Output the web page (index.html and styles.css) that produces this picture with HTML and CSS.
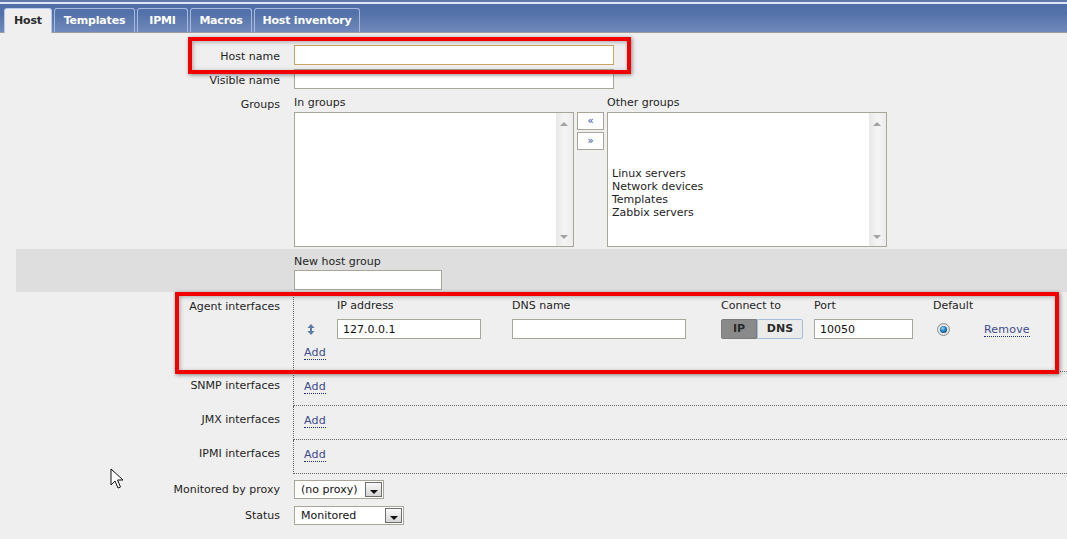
FILE: index.html
```html
<!DOCTYPE html>
<html lang="en">
<head>
    <meta charset="UTF-8">
    <title>Host configuration</title>
    <link rel="stylesheet" href="styles.css">
</head>
<body>
    <div class="tabbar">
        <ul class="tabs">
            <li class="tab active tab-host">Host</li>
            <li class="tab tab-templates">Templates</li>
            <li class="tab tab-ipmi">IPMI</li>
            <li class="tab tab-macros">Macros</li>
            <li class="tab tab-inventory">Host inventory</li>
        </ul>
    </div>

    <div class="form">
        <div class="row row-host">
            <div class="label">Host name</div>
            <div class="field"><input class="text wide focused" type="text"></div>
        </div>
        <div class="row row-visible">
            <div class="label">Visible name</div>
            <div class="field"><input class="text wide" type="text"></div>
        </div>
        <div class="row row-groups">
            <div class="label label-groups">Groups</div>
            <div class="field groups">
                <div class="group-head">In groups</div>
                <div class="group-head"></div>
                <div class="group-head">Other groups</div>
                <div class="listbox">
                    <div class="list-items"></div>
                    <div class="scrollbar"><span class="arrow up"></span><span class="arrow down"></span></div>
                </div>
                <div class="move-buttons">
                    <div class="move-btn">&laquo;</div>
                    <div class="move-btn">&raquo;</div>
                </div>
                <div class="listbox">
                    <div class="list-items other">
                        <div>Linux servers</div>
                        <div>Network devices</div>
                        <div>Templates</div>
                        <div>Zabbix servers</div>
                    </div>
                    <div class="scrollbar"><span class="arrow up"></span><span class="arrow down"></span></div>
                </div>
            </div>
        </div>
        <div class="row row-newgroup">
            <div class="label"></div>
            <div class="field">
                <div class="caption">New host group</div>
                <input class="text short" type="text">
            </div>
        </div>

        <div class="row row-agent">
            <div class="label">Agent interfaces</div>
            <div class="iface">
                <div class="iface-grid">
                    <div></div>
                    <div class="col-head">IP address</div>
                    <div class="col-head">DNS name</div>
                    <div class="col-head">Connect to</div>
                    <div class="col-head">Port</div>
                    <div class="col-head">Default</div>
                    <div></div>

                    <div class="drag">
                        <svg width="8" height="11" viewBox="0 0 8 11"><path d="M4 0 L7.5 4 L5 4 L5 7 L7.5 7 L4 11 L0.5 7 L3 7 L3 4 L0.5 4 Z" fill="#5b7ba5"/></svg>
                    </div>
                    <div><input class="text ip" type="text" value="127.0.0.1"></div>
                    <div><input class="text dns" type="text"></div>
                    <div class="toggle"><span class="opt on">IP</span><span class="opt">DNS</span></div>
                    <div><input class="text port" type="text" value="10050"></div>
                    <div class="radio-cell">
                        <svg width="13" height="13" viewBox="0 0 13 13">
                            <defs>
                                <radialGradient id="dot" cx="0.4" cy="0.35" r="0.7">
                                    <stop offset="0" stop-color="#9fd3f5"/>
                                    <stop offset="0.5" stop-color="#2a86c4"/>
                                    <stop offset="1" stop-color="#0d4f80"/>
                                </radialGradient>
                            </defs>
                            <circle cx="6.5" cy="6.5" r="6" fill="#e4e4e4" stroke="#8d8d8d"/>
                            <circle cx="6.5" cy="6.5" r="3.6" fill="url(#dot)"/>
                        </svg>
                    </div>
                    <div><span class="link">Remove</span></div>
                </div>
                <div class="add-line"><span class="link">Add</span></div>
            </div>
        </div>
        <div class="row row-iface">
            <div class="label">SNMP interfaces</div>
            <div class="iface small"><span class="link">Add</span></div>
        </div>
        <div class="row row-iface">
            <div class="label">JMX interfaces</div>
            <div class="iface small"><span class="link">Add</span></div>
        </div>
        <div class="row row-iface">
            <div class="label">IPMI interfaces</div>
            <div class="iface small"><span class="link">Add</span></div>
        </div>

        <div class="row row-proxy">
            <div class="label">Monitored by proxy</div>
            <div class="field">
                <div class="select proxy"><span>(no proxy)</span><span class="drop"></span></div>
            </div>
        </div>
        <div class="row row-status">
            <div class="label">Status</div>
            <div class="field">
                <div class="select status"><span>Monitored</span><span class="drop"></span></div>
            </div>
        </div>
    </div>

    <!-- annotation boxes drawn over the screenshot -->
    <div class="mark mark-host"></div>
    <div class="mark mark-agent"></div>

    <svg class="cursor" width="14" height="22" viewBox="0 0 14 22">
        <path d="M1 1 L1 17 L5 13 L8 20 L10.5 19 L7.5 12 L13 12 Z" fill="#fff" stroke="#111" stroke-width="1" stroke-linejoin="round"/>
    </svg>
</body>
</html>
```

FILE: styles.css
```css
/* Base */
body {
    margin: 0;
    background-color: #efefef;
    font-family: 'DejaVu Sans', Verdana, sans-serif;
    font-size: 11px;
    color: #1e1e1e;
}

/* Tab bar */
.tabbar {
    height: 32px;
    background: linear-gradient(to bottom, #5f78a9 0, #5f78a9 2px, #dfe7f3 2px, #dfe7f3 4px, #4f6ea7 4px, #5472aa 14px, #7189bb 32px);
    border-bottom: 1px solid #9c9c9c;
}

.tabs {
    list-style: none;
    margin: 0;
    padding: 8px 0 0 4px;
    display: flex;
    gap: 2px;
    height: 24px;
}

.tab {
    box-sizing: border-box;
    height: 24px;
    line-height: 24px;
    padding: 0;
    text-align: center;
    border: 1px solid #a6badf;
    border-bottom: none;
    border-radius: 3px 3px 0 0;
    color: #fff;
    font-weight: bold;
    letter-spacing: -0.2px;
}

.tab-host { width: 48px; }
.tab-templates { width: 81px; }
.tab-ipmi { width: 51px; }
.tab-macros { width: 62px; }
.tab-inventory { width: 106px; }

.tab.active {
    background: #efefef;
    color: #2a2a2a;
    height: 25px;
    border-color: #b8c8e6;
}

/* Form rows */
.form {
    margin-left: 16px;
    padding-top: 12px;
}

.row {
    display: grid;
    grid-template-columns: 264px 1fr;
    column-gap: 14px;
}

.label {
    text-align: right;
    line-height: 14px;
}

.text {
    box-sizing: border-box;
    height: 20px;
    margin: 0;
    padding: 0 5px;
    border: 1px solid #a9a699;
    background: #fff;
    font-family: 'DejaVu Sans', Verdana, sans-serif;
    font-size: 11px;
    color: #111;
    outline: none;
}

.text.wide {
    width: 320px;
}

.text.focused {
    border-color: #c9a45f;
}

.row-host .label {
    padding-top: 5px;
}

.row-visible {
    margin-top: 4px;
}

.row-visible .label {
    padding-top: 5px;
}

/* Groups */
.row-groups {
    margin-top: 6px;
}

.label-groups {
    padding-top: 3px;
}

.groups {
    display: grid;
    grid-template-columns: 280px 27px 280px;
    grid-template-rows: 17px 135px;
    column-gap: 3px;
}

.group-head {
    line-height: 14px;
    padding-top: 1px;
}

.listbox {
    display: flex;
    border: 1px solid #a9a699;
    background: #fff;
}

.list-items {
    flex: 1;
    padding: 54px 0 0 4px;
    line-height: 13px;
}

.scrollbar {
    width: 17px;
    position: relative;
    background: linear-gradient(to right, #e8e8e8, #f5f5f5 50%, #ececec);
}

.arrow {
    position: absolute;
    left: 4px;
    width: 0;
    height: 0;
    border-left: 4px solid transparent;
    border-right: 4px solid transparent;
}

.arrow.up {
    top: 9px;
    border-bottom: 4px solid #a3a3a3;
}

.arrow.down {
    bottom: 7px;
    border-top: 4px solid #a3a3a3;
}

.move-buttons {
    display: flex;
    flex-direction: column;
    gap: 2px;
}

.move-btn {
    box-sizing: border-box;
    height: 18px;
    border: 1px solid #a9a699;
    background: #fff;
    color: #2b4a9a;
    text-align: center;
    line-height: 15px;
    font-size: 10px;
}

/* New host group band */
.row-newgroup {
    margin-top: 2px;
    background: #dedede;
    padding: 5px 0 2px;
}

.caption {
    line-height: 14px;
    padding-top: 1px;
    margin-bottom: 1px;
}

.text.short {
    width: 148px;
}

/* Interfaces */
.iface {
    margin-left: -1px;
    border-left: 1px dotted #666;
    border-bottom: 1px dotted #666;
    padding-left: 10px;
}

.row-agent .label {
    padding-top: 8px;
}

.row-agent .iface {
    padding-top: 6px;
    padding-bottom: 12px;
}

.iface-grid {
    display: grid;
    grid-template-columns: 33px 175px 209px 93px 119px 51px auto;
    grid-template-rows: 14px 20px;
    row-gap: 7px;
    align-items: center;
}

.col-head {
    line-height: 14px;
    padding-top: 1px;
}

.drag {
    padding-left: 3px;
    display: flex;
}

.text.ip {
    width: 144px;
}

.text.dns {
    width: 174px;
}

.text.port {
    width: 99px;
}

.toggle {
    display: flex;
    height: 20px;
    font-weight: bold;
    color: #2a2a2a;
}

.opt {
    box-sizing: border-box;
    height: 20px;
    line-height: 18px;
    text-align: center;
    border: 1px solid #a8bddc;
    background: #ebebeb;
    width: 46px;
    border-radius: 0 2px 2px 0;
}

.opt.on {
    width: 36px;
    background: #8a8a8a;
    border-color: #7b7b7b;
    border-radius: 2px 0 0 2px;
}

.radio-cell {
    display: flex;
    padding-left: 4px;
}

.link {
    color: #3c4a8c;
    border-bottom: 1px dotted #1e2a9a;
    letter-spacing: 0.2px;
}

.add-line {
    margin-top: 8px;
    line-height: 12px;
}

.row-iface .label {
    padding-top: 7px;
}

.iface.small {
    height: 33px;
    box-sizing: content-box;
    padding-top: 0;
    line-height: 14px;
}

.iface.small .link {
    display: inline-block;
    margin-top: 9px;
    line-height: 12px;
}

/* Selects */
.row-proxy {
    margin-top: 6px;
}

.row-proxy .label {
    padding-top: 3px;
}

.row-status {
    margin-top: 7px;
}

.row-status .label {
    padding-top: 3px;
}

.select {
    box-sizing: border-box;
    height: 19px;
    border: 1px solid #a9a699;
    background: #fff;
    display: flex;
    align-items: center;
    justify-content: space-between;
    padding: 0 1px 0 6px;
    color: #111;
}

.select.proxy {
    width: 90px;
}

.select.status {
    width: 110px;
}

.drop {
    box-sizing: border-box;
    width: 17px;
    height: 15px;
    border: 1px solid #6e6e6e;
    background: linear-gradient(#fafafa, #d6d6d6);
    position: relative;
}

.drop::after {
    content: '';
    position: absolute;
    left: 4px;
    bottom: 2px;
    border-left: 4px solid transparent;
    border-right: 4px solid transparent;
    border-top: 4px solid #111;
}

/* Red annotation boxes lying over the form */
.mark {
    position: absolute;
    box-sizing: border-box;
    border: 4px solid #f20000;
    box-shadow: 1px 1px 4px rgba(0, 0, 0, 0.45), inset 1px 1px 4px rgba(0, 0, 0, 0.3);
}

.mark-host {
    left: 188px;
    top: 37px;
    width: 443px;
    height: 37px;
}

.mark-agent {
    left: 175px;
    top: 292px;
    width: 884px;
    height: 82px;
}

.cursor {
    position: absolute;
    left: 110px;
    top: 468px;
}
```
